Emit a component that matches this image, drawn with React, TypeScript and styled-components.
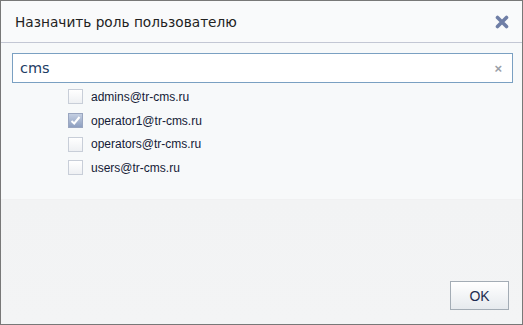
import React, { useState } from "react";
import styled, { createGlobalStyle } from "styled-components";

const GlobalStyle = createGlobalStyle`
  html, body {
    margin: 0;
    padding: 0;
    background: #ffffff;
  }
  * {
    box-sizing: border-box;
  }
`;

const Dialog = styled.div`
  width: 523px;
  height: 325px;
  border: 1px solid #787878;
  display: flex;
  flex-direction: column;
  background: #f7f9fa;
  font-family: "Liberation Sans", Arial, sans-serif;
`;

const Header = styled.div`
  height: 42px;
  display: flex;
  align-items: center;
  justify-content: space-between;
  padding: 0 12px 0 14px;
  background: #f9fafb;
  border-bottom: 1px solid #c3c7d4;
`;

const Title = styled.h1`
  margin: 0;
  font-family: "DejaVu Sans", Verdana, sans-serif;
  font-size: 13.7px;
  font-weight: normal;
  color: #222;
`;

const CloseButton = styled.button`
  border: 0;
  background: transparent;
  padding: 0;
  width: 16px;
  height: 16px;
  display: flex;
  align-items: center;
  justify-content: center;
  cursor: pointer;
`;

const Body = styled.div`
  padding: 10px 9px 0 11px;
  height: 156px;
`;

const SearchBox = styled.div`
  height: 30px;
  display: flex;
  align-items: center;
  border: 1px solid #7aa0c2;
  background: #ffffff;
  padding: 0 8px 0 7px;
`;

const SearchInput = styled.input`
  flex: 1;
  border: 0;
  outline: none;
  background: transparent;
  font-family: "DejaVu Sans", Verdana, sans-serif;
  font-size: 14.5px;
  color: #1d3c64;
  padding: 0;
  caret-color: #000;
`;

const ClearButton = styled.span`
  color: #9aa0a8;
  font-size: 13px;
  font-weight: bold;
  line-height: 1;
  margin-right: 2px;
  cursor: pointer;
`;

const List = styled.ul`
  list-style: none;
  margin: 0;
  padding: 2px 0 0 56px;
`;

const Row = styled.li`
  height: 23.7px;
  display: flex;
  align-items: center;
  gap: 8px;
  font-size: 12px;
  color: #141a36;
`;

const Box = styled.span<{ checked: boolean }>`
  width: 15px;
  height: 15px;
  border: 1px solid ${(p) => (p.checked ? "#9aa6c0" : "#c8ced8")};
  background: ${(p) =>
    p.checked
      ? "linear-gradient(#c4cfe2, #8e9fc0)"
      : "linear-gradient(#ffffff, #eef0f3)"};
  display: flex;
  align-items: center;
  justify-content: center;
`;

const Footer = styled.div`
  flex: 1;
  display: flex;
  align-items: flex-end;
  justify-content: flex-end;
  padding: 0 13px 14px 0;
  background: linear-gradient(#f2f3f4, #f3f4f5);
  border-top: 1px solid #f0f1f2;
`;

const OkButton = styled.button`
  width: 59px;
  height: 29px;
  border: 1px solid #a3acb5;
  background: linear-gradient(#ffffff, #e6eaee);
  font-family: "Liberation Sans", Arial, sans-serif;
  font-size: 14px;
  color: #1d2c50;
  cursor: pointer;
`;

const users = [
  "admins@tr-cms.ru",
  "operator1@tr-cms.ru",
  "operators@tr-cms.ru",
  "users@tr-cms.ru",
];

export default function App() {
  const [query, setQuery] = useState("cms");
  const [checked, setChecked] = useState<string[]>(["operator1@tr-cms.ru"]);

  const toggle = (u: string) =>
    setChecked((c) => (c.includes(u) ? c.filter((x) => x !== u) : [...c, u]));

  return (
    <>
      <GlobalStyle />
      <Dialog>
        <Header>
          <Title>Назначить роль пользователю</Title>
          <CloseButton>
            <svg width="14" height="14" viewBox="0 0 14 14">
              <path
                d="M2.5 2.5 L11.5 11.5 M11.5 2.5 L2.5 11.5"
                stroke="#6f7ea6"
                strokeWidth="3.6"
                strokeLinecap="round"
              />
            </svg>
          </CloseButton>
        </Header>
        <Body>
          <SearchBox>
            <SearchInput
              value={query}
              onChange={(e) => setQuery(e.target.value)}
              autoFocus
            />
            <ClearButton onClick={() => setQuery("")}>×</ClearButton>
          </SearchBox>
          <List>
            {users.map((u) => (
              <Row key={u} onClick={() => toggle(u)}>
                <Box checked={checked.includes(u)}>
                  {checked.includes(u) && (
                    <svg width="11" height="11" viewBox="0 0 11 11">
                      <path
                        d="M1.5 6 L4.2 8.5 L9.5 2"
                        stroke="#ffffff"
                        strokeWidth="2"
                        fill="none"
                      />
                    </svg>
                  )}
                </Box>
                {u}
              </Row>
            ))}
          </List>
        </Body>
        <Footer>
          <OkButton>OK</OkButton>
        </Footer>
      </Dialog>
    </>
  );
}
